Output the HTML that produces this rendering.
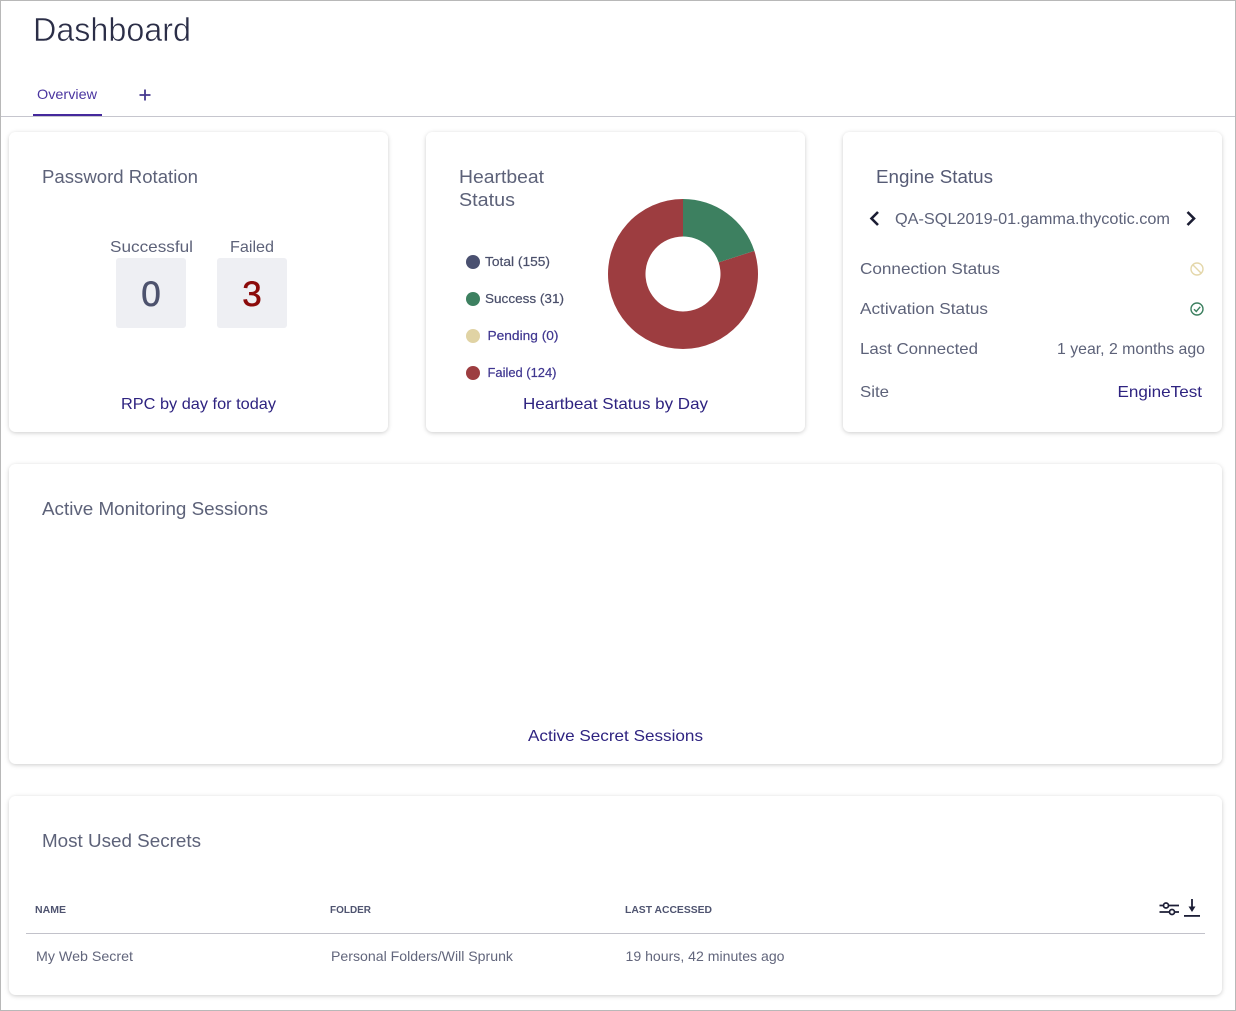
<!DOCTYPE html>
<html lang="en">
<head>
<meta charset="utf-8">
<title>Dashboard</title>
<style>
html,body{margin:0;padding:0;background:#fff;width:1236px;height:1011px;overflow:hidden}
svg{display:block;position:absolute;left:0;top:0}
text{font-family:"Liberation Sans",sans-serif;fill:#565b75}
.card{fill:#fff;filter:url(#sh)}
.t{font-size:18px;fill:#5d6279}
.b{font-size:16px;fill:#5d6279}
.l{font-size:16px;fill:#2e2380}
.g{font-size:13px;fill:#4a4f6a;stroke:#4a4f6a;stroke-width:.2px}
.p{font-size:13px;fill:#3f3690;stroke:#3f3690;stroke-width:.2px}
.h{font-size:10.5px;fill:#4f5470;font-weight:bold}
.r{font-size:14px;fill:#62667c}
</style>
</head>
<body>
<svg width="1236" height="1011" viewBox="0 0 1236 1011" xmlns="http://www.w3.org/2000/svg">
<defs>
<filter id="sh" x="-5%" y="-10%" width="110%" height="120%">
<feDropShadow dx="0" dy="1" stdDeviation="2" flood-color="#000" flood-opacity="0.2"/>
</filter>
</defs>
<rect x="0.5" y="0.5" width="1235" height="1010" fill="#fff" stroke="#b8b8b8"/>

<text x="33" y="41" font-size="33" style="fill:#2b2e47;stroke:#fff;stroke-width:.5px" textLength="158" lengthAdjust="spacingAndGlyphs">Dashboard</text>
<text x="37" y="99" font-size="14" style="fill:#4a35a0" textLength="60" lengthAdjust="spacingAndGlyphs">Overview</text>
<path d="M139.500 95h11M145 89.500v11" stroke="#45388f" stroke-width="1.800" fill="none"/>
<rect x="1" y="116" width="1234" height="1" fill="#c6c6ce"/>
<rect x="33" y="114" width="69" height="2" fill="#44289c"/>

<rect class="card" x="9" y="132" width="379" height="300" rx="7"/>
<rect class="card" x="426" y="132" width="379" height="300" rx="7"/>
<rect class="card" x="843" y="132" width="379" height="300" rx="7"/>
<rect class="card" x="9" y="464" width="1213" height="300" rx="7"/>
<rect class="card" x="9" y="796" width="1213" height="199" rx="7"/>

<text class="t" x="42" y="183" textLength="156" lengthAdjust="spacingAndGlyphs">Password Rotation</text>
<text class="b" x="110" y="252" textLength="83" lengthAdjust="spacingAndGlyphs">Successful</text>
<text class="b" x="230" y="252" textLength="44" lengthAdjust="spacingAndGlyphs">Failed</text>
<rect x="116" y="258" width="70" height="70" rx="3" fill="#eeeff3"/>
<rect x="217" y="258" width="70" height="70" rx="3" fill="#eeeff3"/>
<text x="151" y="306" font-size="35" text-anchor="middle" style="fill:#4d526d;stroke:#4d526d;stroke-width:.6px">0</text>
<text x="252" y="306" font-size="35" text-anchor="middle" style="fill:#8b0a0a;stroke:#8b0a0a;stroke-width:.6px">3</text>
<text class="l" x="121" y="409" textLength="155" lengthAdjust="spacingAndGlyphs">RPC by day for today</text>

<text class="t" x="459" y="183" textLength="85" lengthAdjust="spacingAndGlyphs">Heartbeat</text>
<text class="t" x="459" y="206" textLength="56" lengthAdjust="spacingAndGlyphs">Status</text>
<circle cx="473" cy="262" r="7" fill="#4a5070"/>
<circle cx="473" cy="299" r="7" fill="#3d8060"/>
<circle cx="473" cy="336" r="7" fill="#e0d3a4"/>
<circle cx="473" cy="373" r="7" fill="#9d3d40"/>
<text class="g" x="485" y="266" textLength="65" lengthAdjust="spacingAndGlyphs">Total (155)</text>
<text class="g" x="485" y="303" textLength="79" lengthAdjust="spacingAndGlyphs">Success (31)</text>
<text class="p" x="487.500" y="340" textLength="71" lengthAdjust="spacingAndGlyphs">Pending (0)</text>
<text class="p" x="487.500" y="377" textLength="69" lengthAdjust="spacingAndGlyphs">Failed (124)</text>
<path d="M683 199A75 75 0 1 0 754.330 250.820L718.660 262.410A37.500 37.500 0 1 1 683 236.500Z" fill="#9d3d40"/>
<path d="M683 199A75 75 0 0 1 754.330 250.820L718.660 262.410A37.500 37.500 0 0 0 683 236.500Z" fill="#3d8060"/>
<text class="l" x="523" y="409" textLength="185" lengthAdjust="spacingAndGlyphs">Heartbeat Status by Day</text>

<text class="t" x="876" y="183" textLength="117" lengthAdjust="spacingAndGlyphs" style="fill:#565b75">Engine Status</text>
<path d="M878 212L871.500 218.500L878 225" fill="none" stroke="#1b1d33" stroke-width="2.600"/>
<path d="M1187.500 212L1194 218.500L1187.500 225" fill="none" stroke="#1b1d33" stroke-width="2.600"/>
<text class="b" x="895" y="224" textLength="275" lengthAdjust="spacingAndGlyphs">QA-SQL2019-01.gamma.thycotic.com</text>
<text class="b" x="860" y="274" textLength="140" lengthAdjust="spacingAndGlyphs">Connection Status</text>
<text class="b" x="860" y="314" textLength="128" lengthAdjust="spacingAndGlyphs">Activation Status</text>
<text class="b" x="860" y="354" textLength="118" lengthAdjust="spacingAndGlyphs">Last Connected</text>
<text class="b" x="860" y="397" textLength="29" lengthAdjust="spacingAndGlyphs">Site</text>
<text class="b" x="1057" y="354" textLength="148" lengthAdjust="spacingAndGlyphs">1 year, 2 months ago</text>
<text class="l" x="1117.500" y="397" textLength="84.500" lengthAdjust="spacingAndGlyphs">EngineTest</text>
<circle cx="1197" cy="269" r="6" fill="none" stroke="#e4d7aa" stroke-width="1.400"/>
<path d="M1192.800 264.800L1201.200 273.200" stroke="#e4d7aa" stroke-width="1.400"/>
<circle cx="1197" cy="309" r="6" fill="none" stroke="#3d8060" stroke-width="1.400"/>
<path d="M1194 309.200L1196.300 311.500L1200.200 306.800" fill="none" stroke="#3d8060" stroke-width="1.400"/>

<text class="t" x="42" y="515" textLength="226" lengthAdjust="spacingAndGlyphs">Active Monitoring Sessions</text>
<text class="l" x="528" y="741" textLength="175" lengthAdjust="spacingAndGlyphs">Active Secret Sessions</text>

<text class="t" x="42" y="847" textLength="159" lengthAdjust="spacingAndGlyphs">Most Used Secrets</text>
<text class="h" x="35" y="913" textLength="31" lengthAdjust="spacingAndGlyphs">NAME</text>
<text class="h" x="330" y="913" textLength="41" lengthAdjust="spacingAndGlyphs">FOLDER</text>
<text class="h" x="625" y="913" textLength="87" lengthAdjust="spacingAndGlyphs">LAST ACCESSED</text>
<rect x="26" y="933" width="1179" height="1" fill="#c2c2ca"/>
<text class="r" x="36" y="961" textLength="97" lengthAdjust="spacingAndGlyphs">My Web Secret</text>
<text class="r" x="331" y="961" textLength="182" lengthAdjust="spacingAndGlyphs">Personal Folders/Will Sprunk</text>
<text class="r" x="625.500" y="961" textLength="159" lengthAdjust="spacingAndGlyphs">19 hours, 42 minutes ago</text>
<g fill="none" stroke="#1c1e36" stroke-width="1.700">
<path d="M1159.500 905.500h4M1168.500 905.500h10.500M1159.500 912h10M1174.500 912h4.500"/>
<circle cx="1166" cy="905.500" r="2.500"/>
<circle cx="1172" cy="912" r="2.500"/>
</g>
<path d="M1192 899v8" stroke="#1c1e36" stroke-width="1.800"/>
<path d="M1188.500 906.500h7l-3.500 5.500z" fill="#1c1e36"/>
<rect x="1184" y="915" width="16" height="1.800" fill="#1c1e36"/>
</svg>
</body>
</html>
